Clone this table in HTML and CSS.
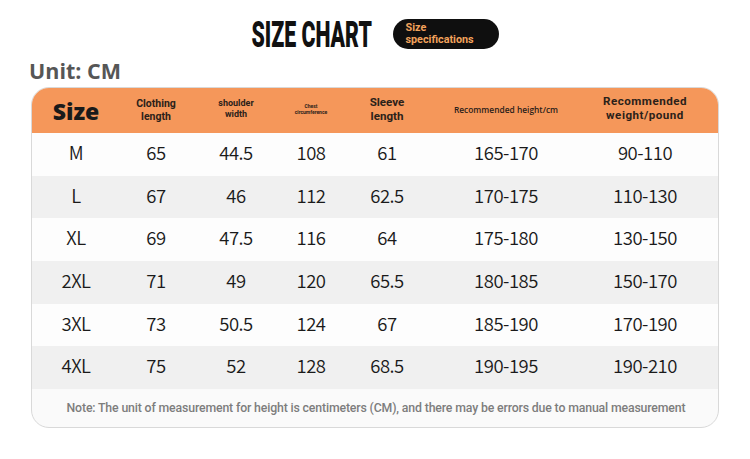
FILE: index.html
```html
<!DOCTYPE html>
<html>
<head>
<meta charset="utf-8">
<link rel="stylesheet" href="styles.css">
</head>
<body>
<div class="page">
  <div class="top">
    <div class="title"><span class="title-text">SIZE CHART</span></div>
    <div class="badge">Size<br>specifications</div>
  </div>
  <div class="unit">Unit: CM</div>
  <div class="card">
    <div class="row head">
      <div class="c h-size">Size</div>
      <div class="c h-md">Clothing<br>length</div>
      <div class="c h-sm">shoulder<br>width</div>
      <div class="c h-xs">Chest<br>circumference</div>
      <div class="c h-lg">Sleeve<br>length</div>
      <div class="c h-rh">Recommended height/cm</div>
      <div class="c h-lg wide">Recommended<br>weight/pound</div>
    </div>
    <div class="row w"><div class="c">M</div><div class="c">65</div><div class="c">44.5</div><div class="c">108</div><div class="c">61</div><div class="c">165-170</div><div class="c">90-110</div></div>
    <div class="row g"><div class="c">L</div><div class="c">67</div><div class="c">46</div><div class="c">112</div><div class="c">62.5</div><div class="c">170-175</div><div class="c">110-130</div></div>
    <div class="row w"><div class="c">XL</div><div class="c">69</div><div class="c">47.5</div><div class="c">116</div><div class="c">64</div><div class="c">175-180</div><div class="c">130-150</div></div>
    <div class="row g"><div class="c">2XL</div><div class="c">71</div><div class="c">49</div><div class="c">120</div><div class="c">65.5</div><div class="c">180-185</div><div class="c">150-170</div></div>
    <div class="row w"><div class="c">3XL</div><div class="c">73</div><div class="c">50.5</div><div class="c">124</div><div class="c">67</div><div class="c">185-190</div><div class="c">170-190</div></div>
    <div class="row g"><div class="c">4XL</div><div class="c">75</div><div class="c">52</div><div class="c">128</div><div class="c">68.5</div><div class="c">190-195</div><div class="c">190-210</div></div>
    <div class="note">Note: The unit of measurement for height is centimeters (CM), and there may be errors due to manual measurement</div>
  </div>
</div>
</body>
</html>
```

FILE: styles.css
```css
html, body {
  margin: 0;
  padding: 0;
  background: #ffffff;
}
.page {
  width: 750px;
  height: 459px;
  font-family: "Noto Sans CJK SC", "Noto Sans", sans-serif;
  color: #222;
}
.top {
  display: flex;
  justify-content: center;
  align-items: center;
  gap: 21px;
  padding-top: 19px;
  height: 30px;
}
.title {
  width: 120px;
  height: 30px;
  display: flex;
  align-items: center;
  white-space: nowrap;
}
.title-text {
  display: inline-block;
  font-family: Roboto, "Liberation Sans", sans-serif;
  font-weight: 900;
  font-size: 21.3px;
  line-height: 16px;
  color: #111;
  transform: scaleY(1.75);
  transform-origin: center;
  margin-top: 1px;
}
.badge {
  width: 106px;
  height: 30px;
  box-sizing: border-box;
  background: #0f0f0f;
  border-radius: 15px;
  padding: 3px 0 0 13px;
  font-family: Roboto, "Liberation Sans", sans-serif;
  font-weight: 700;
  font-size: 10.8px;
  line-height: 12.4px;
  color: #f2a25c;
}
.unit {
  margin: 7px 0 0 29px;
  font-family: "Open Sans", "Noto Sans", sans-serif;
  font-weight: 700;
  font-size: 21.5px;
  line-height: 30px;
  height: 31px;
  color: #565656;
}
.card {
  margin-left: 31px;
  width: 688px;
  box-sizing: border-box;
  border: 1px solid #d9d9d9;
  border-radius: 18px;
  overflow: hidden;
  background: #fafafa;
}
.row {
  display: grid;
  grid-template-columns: 88px 72px 88px 62px 90px 148px 1fr;
  height: 42.7px;
  align-items: center;
}
.row.w { background: #fdfdfd; }
.row.g { background: #f0f0f0; }
.row .c {
  text-align: center;
  font-family: "Noto Sans CJK SC", "Noto Sans", sans-serif;
  font-weight: 350;
  font-size: 18.5px;
  letter-spacing: -0.5px;
  line-height: 22px;
  padding-bottom: 5px;
  color: #1a1a1a;
}
.row .c:last-child { padding-right: 8px; }
.row.head {
  height: 45px;
  background: #f5975a;
}
.head .c {
  font-family: Roboto, "Liberation Sans", sans-serif;
  font-weight: 700;
  color: #2b2119;
  letter-spacing: 0;
  padding-bottom: 0;
}
.head .h-size {
  font-family: "Open Sans", "Noto Sans", sans-serif;
  font-size: 23px;
  line-height: 32px;
  color: #1a1a1a;
  font-weight: 800;
  padding-top: 1px;
}
.head .h-md {
  font-size: 10.5px;
  line-height: 12.4px;
  font-weight: 700;
}
.head .h-sm {
  font-size: 9px;
  line-height: 10.6px;
  font-weight: 700;
  margin-top: -4px;
}
.head .h-xs {
  font-size: 5px;
  line-height: 6px;
  font-weight: 700;
  margin-top: -4px;
}
.head .h-lg {
  font-size: 11.6px;
  line-height: 13.6px;
  font-weight: 700;
  margin-top: -2px;
}
.head .wide {
  letter-spacing: 0.5px;
  margin-top: -4px;
}
.head .h-rh {
  font-family: "Open Sans", "Noto Sans", sans-serif;
  font-size: 8.4px;
  line-height: 12px;
  font-weight: 600;
  margin-top: -2px;
}
.note {
  height: 38px;
  display: flex;
  align-items: center;
  justify-content: center;
  font-family: Roboto, "Noto Sans", sans-serif;
  font-weight: 500;
  font-size: 12.3px;
  letter-spacing: -0.15px;
  color: #7d7d7d;
  padding-left: 2px;
}
```
